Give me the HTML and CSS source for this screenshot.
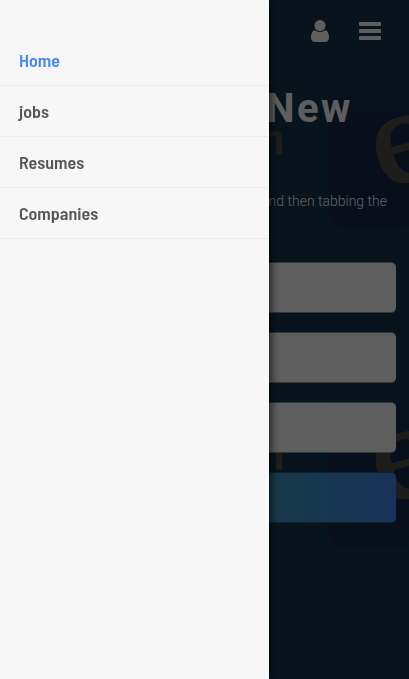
FILE: index.html
```html
<!doctype html>
<html lang="en">
  <head>
    <meta charset="UTF-8" />
    <meta name="viewport" content="width=device-width, initial-scale=1.0" />
    <title>Job Board</title>
    <link rel="stylesheet" href="styles.css">
  </head>
  <body>
    <div class="page">
      <div class="page-bg" aria-hidden="true">
        <div class="tile">
          <span class="tile-word">n</span>
          <div class="tile-card"><span>e</span></div>
        </div>
        <div class="tile">
          <span class="tile-word">n</span>
          <div class="tile-card"><span>e</span></div>
        </div>
      </div>

      <header class="header">
        <svg class="icon-user" width="18" height="22" viewBox="0 0 18 22">
          <circle cx="9" cy="5.6" r="5.6" />
          <path d="M4.3 10.2C1.3 10.3 0 13.4 0 17.5C0 20.2 1.5 22 3.7 22H14.3C16.5 22 18 20.2 18 17.5C18 13.4 16.7 10.3 13.7 10.2C12.4 11.4 10.8 12 9 12C7.2 12 5.6 11.4 4.3 10.2Z" />
        </svg>
        <svg class="icon-menu" width="22" height="18" viewBox="0 0 22 18">
          <rect width="22" height="4" rx="0.8" />
          <rect y="7" width="22" height="4" rx="0.8" />
          <rect y="14" width="22" height="4" rx="0.8" />
        </svg>
      </header>

      <main class="hero">
        <h1>New</h1>
        <p>and then tabbing the</p>
        <form class="search-form">
          <input type="text" />
          <input type="text" />
          <input type="text" />
          <button type="button"></button>
        </form>
      </main>
    </div>

    <div class="overlay"></div>

    <nav class="drawer">
      <ul>
        <li><a class="active" href="#">Home</a></li>
        <li><a href="#">jobs</a></li>
        <li><a href="#">Resumes</a></li>
        <li><a href="#">Companies</a></li>
      </ul>
    </nav>
  </body>
</html>
```

FILE: styles.css
```css
* {
  box-sizing: border-box;
}

body {
  margin: 0;
  height: 100vh;
  overflow: hidden;
  font-family: Roboto, sans-serif;
  background-color: #13384c;
}

.page {
  position: relative;
  height: 100vh;
  overflow: hidden;
  color: #fff;
}

/* repeated artwork behind the hero */
.page-bg {
  position: absolute;
  inset: 0;
  padding-top: 76px;
  overflow: hidden;
}

.tile {
  display: flex;
  justify-content: flex-end;
  height: 316px;
  color: #51504e;
}

.tile-word {
  margin-right: 45px;
  padding-top: 39px;
  font-size: 42px;
  font-weight: 700;
  line-height: 50px;
}

.tile-card {
  width: 80px;
  height: 150px;
  padding-left: 47px;
  overflow: hidden;
  border-radius: 0 0 0 12px;
  background: linear-gradient(rgba(26, 40, 74, 0), #1a284a 40px);
  box-shadow: 0 6px 8px -4px rgba(0, 0, 0, 0.3);
}

.tile-card span {
  display: inline-block;
  font-family: "Liberation Serif", serif;
  font-size: 136px;
  line-height: 118px;
  -webkit-text-stroke: 2px #51504e;
  transform: rotate(-15deg) scaleX(1.15);
  transform-origin: 50% 62%;
}

.header {
  position: relative;
  display: flex;
  justify-content: flex-end;
  align-items: center;
  gap: 30px;
  height: 62px;
  padding-right: 28px;
  fill: #fff;
}

.hero {
  position: relative;
  padding: 22px 13px 0;
}

.hero h1 {
  margin: 0;
  padding-right: 43px;
  font-size: 40px;
  font-weight: 700;
  line-height: 49px;
  letter-spacing: 2.5px;
  text-align: right;
}

.hero p {
  margin: 57px 9px 0 0;
  font-size: 14px;
  font-weight: 300;
  line-height: 22px;
  text-align: right;
}

.search-form {
  display: flex;
  flex-direction: column;
  gap: 19px;
  margin-top: 50px;
}

.search-form input,
.search-form button {
  width: 100%;
  height: 51px;
  border: solid #8a959b;
  border-width: 1px 0;
  border-radius: 5px;
}

.search-form input {
  background-color: #fff;
}

.search-form button {
  border-color: #286578;
  background: linear-gradient(90deg, #3caca8, #3d9ac4 68%, #4287f0);
}

.overlay {
  position: fixed;
  inset: 0;
  background-color: rgba(0, 0, 0, 0.63);
}

.drawer {
  position: fixed;
  top: 0;
  bottom: 0;
  left: 0;
  width: 269px;
  padding-top: 35px;
  background-color: #f7f7f7;
  box-shadow: 0 0 10px #000;
}

.drawer ul {
  margin: 0;
  padding: 0;
  list-style: none;
}

.drawer li {
  border-bottom: 1px solid #ececec;
}

.drawer a {
  display: block;
  padding: 1px 19px 0;
  color: #555;
  font-family: "Barlow Semi Condensed", Barlow, Roboto, sans-serif;
  font-size: 18px;
  font-weight: 600;
  line-height: 49px;
  text-decoration: none;
}

.drawer a.active {
  color: #4285ff;
}
```
